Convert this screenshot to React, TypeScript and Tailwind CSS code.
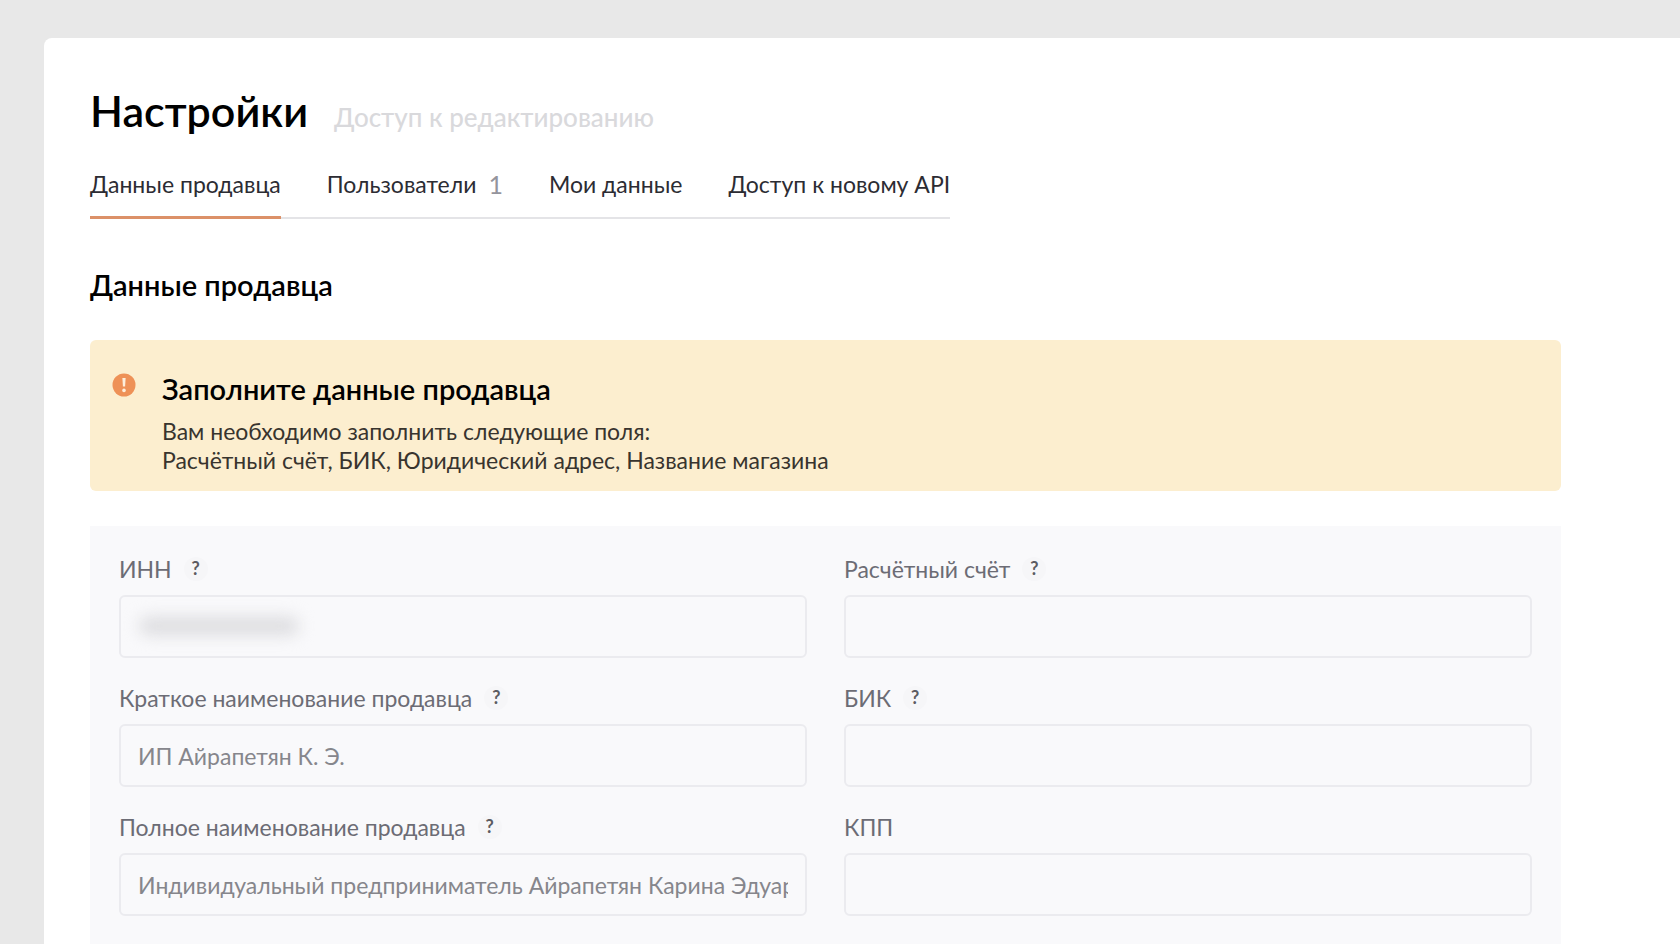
import { useId, type ReactNode } from "react";

type Tab = { title: string; count?: number; active?: boolean };

const tabs: Tab[] = [
  { title: "Данные продавца", active: true },
  { title: "Пользователи", count: 1 },
  { title: "Мои данные" },
  { title: "Доступ к новому API" },
];

type FieldProps = { label: string; value?: string; hint?: boolean; children?: ReactNode };

function Field({ label, value = "", hint = true, children }: FieldProps) {
  const id = useId();
  return (
    <div className="flex flex-col gap-3">
      <div className="flex h-7 items-center gap-3">
        <label htmlFor={id} className="text-[23px] leading-7 text-[#6c6c75]">
          {label}
        </label>
        {hint && (
          <button
            type="button"
            aria-label="Подсказка"
            className="flex size-6 items-center justify-center rounded-full bg-[#f6f6f8] pb-0.5 text-lg leading-5 font-bold text-[#5c5c62]"
          >
            ?
          </button>
        )}
      </div>
      <div className="relative">
        <input
          id={id}
          type="text"
          defaultValue={value}
          className="block h-[63px] w-full rounded-md border-2 border-[#ebebef] bg-transparent px-[17px] text-[23px] text-[#86868c] outline-none"
        />
        {children}
      </div>
    </div>
  );
}

export default function App() {
  return (
    <div className="h-screen overflow-hidden bg-[#e8e8e8] pt-[38px] pl-11 font-['Lato',sans-serif]">
      <main className="min-h-full rounded-tl-lg bg-white pt-[47px] pr-[119px] pl-[46px]">
        <header className="flex items-baseline gap-[26px]">
          <h1 className="text-[43px] leading-[52px] font-semibold text-black">Настройки</h1>
          <span className="text-[26px] leading-8 font-medium text-[#d9d9dc]">Доступ к редактированию</span>
        </header>

        <nav className="mt-[23px] flex w-fit gap-[46px] border-b-2 border-[#e4e4e7]">
          {tabs.map((tab) => (
            <a
              key={tab.title}
              href="#"
              className={
                tab.active
                  ? "-mb-0.5 flex items-center gap-3 border-b-3 border-[#dc9168] pt-[10px] pb-[18px] text-[23px] leading-7 text-[#2c2c33]"
                  : "flex items-center gap-3 pt-[10px] pb-[19px] text-[23px] leading-7 text-[#2c2c33]"
              }
            >
              {tab.title}
              {tab.count !== undefined && <span className="text-[25px] text-[#94949c]">{tab.count}</span>}
            </a>
          ))}
        </nav>

        <h2 className="mt-12 text-[29px] leading-9 font-semibold text-black">Данные продавца</h2>

        <section className="mt-[37px] flex gap-[26px] rounded-md bg-[#fceecf] pt-[31px] pr-6 pb-4 pl-[22px]">
          <svg viewBox="0 0 24 24" className="mt-[2px] size-6 shrink-0" aria-hidden="true">
            <circle cx="12" cy="12" r="11.5" fill="#ee9157" />
            <path d="M10.4 5h3.2l-.5 8.6h-2.2z" fill="#fdeedb" />
            <circle cx="12" cy="17.4" r="1.8" fill="#fdeedb" />
          </svg>
          <div>
            <h3 className="text-[29px] leading-9 font-semibold text-black">Заполните данные продавца</h3>
            <p className="mt-[10px] text-[23px] leading-[29px] text-[#38342e]">
              Вам необходимо заполнить следующие поля:
              <br />
              Расчётный счёт, БИК, Юридический адрес, Название магазина
            </p>
          </div>
        </section>

        <form className="mt-[35px] grid grid-cols-2 gap-x-[37px] gap-y-[26px] bg-[#f9f9fb] px-[29px] pt-[29px] pb-12">
          <Field label="ИНН">
            <div className="absolute top-[22px] left-5 h-[18px] w-40 rounded-full bg-[#dcdcdf] blur-[8px]" />
          </Field>
          <Field label="Расчётный счёт" />
          <Field label="Краткое наименование продавца" value="ИП Айрапетян К. Э." />
          <Field label="БИК" />
          <Field
            label="Полное наименование продавца"
            value="Индивидуальный предприниматель Айрапетян Карина Эдуардовна"
          />
          <Field label="КПП" hint={false} />
        </form>
      </main>
    </div>
  );
}
